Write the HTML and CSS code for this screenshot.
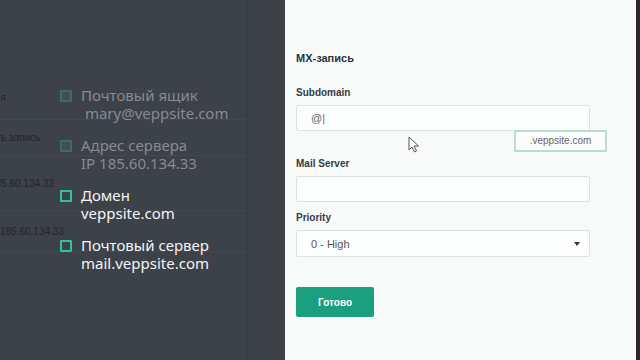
FILE: index.html
```html
<!DOCTYPE html>
<html lang="ru">
<head>
  <meta charset="UTF-8">
  <meta name="viewport" content="width=device-width, initial-scale=1.0">
  <title>MX-запись</title>
  <link rel="stylesheet" href="styles.css">
</head>
<body>
  <div class="overlay">
    <div class="backdrop">
      <div class="bg-row row-1"><span class="col-a">Почтовая</span></div>
      <div class="bg-row row-2"><span class="col-b">Добавить запись</span></div>
      <div class="bg-row row-3"><span class="col-c">185.60.134.33</span></div>
      <div class="bg-row row-4"><span class="col-d">185.60.134.33</span></div>
    </div>

    <ul class="steps">
      <li class="step">
        <span class="check"></span>
        <div class="step-text">Почтовый ящик<br>&nbsp;mary@veppsite.com</div>
      </li>
      <li class="step">
        <span class="check"></span>
        <div class="step-text">Адрес сервера<br>IP 185.60.134.33</div>
      </li>
      <li class="step active">
        <span class="check"></span>
        <div class="step-text">Домен<br>veppsite.com</div>
      </li>
      <li class="step active">
        <span class="check"></span>
        <div class="step-text">Почтовый сервер<br>mail.veppsite.com</div>
      </li>
    </ul>
  </div>

  <div class="panel">
    <form class="record-form">
      <h2>MX-запись</h2>

      <div class="form-group">
        <label for="subdomain">Subdomain</label>
        <div class="field-wrap">
          <input type="text" id="subdomain" value="@|">
          <div class="hint">.veppsite.com</div>
          <svg class="pointer" width="12" height="17" viewBox="0 0 12 17">
            <path d="M1 1 L1 14 L4 11 L6.5 16 L8.5 15 L6 10 L10.5 10 Z" fill="#fff" stroke="#555" stroke-width="1"/>
          </svg>
        </div>
      </div>

      <div class="form-group">
        <label for="mailServer">Mail Server</label>
        <input type="text" id="mailServer">
      </div>

      <div class="form-group">
        <label for="priority">Priority</label>
        <div class="select">
          <span>0 - High</span>
          <span class="caret"></span>
        </div>
      </div>

      <button type="button">Готово</button>
    </form>
  </div>

  <div class="edge"></div>
</body>
</html>
```

FILE: styles.css
```css
body {
  margin: 0;
  width: 640px;
  height: 360px;
  display: flex;
  overflow: hidden;
  background: #3d4148;
}

.overlay {
  width: 285px;
  flex-shrink: 0;
  display: grid;
  overflow: hidden;
  background: #3d4148;
  font-family: 'Noto Sans', sans-serif;
}

.backdrop,
.steps {
  grid-area: 1 / 1;
}

.backdrop {
  padding-top: 75px;
  width: 247px;
  border-right: 1px solid #393c42;
}

.bg-row {
  display: flex;
  align-items: center;
  border-bottom: 1px solid #43474e;
  font-family: 'Liberation Sans', sans-serif;
  font-size: 10px;
  color: #222529;
  overflow: hidden;
}

.row-1 { height: 44px; }
.row-2 { height: 35px; }
.row-3 { height: 54px; }
.row-4 { height: 40px; }

.bg-row span {
  white-space: nowrap;
}

.col-a { margin-left: -38px; }
.col-b { margin-left: -38px; }
.col-c { margin-left: -10px; }
.col-d { margin-left: 0; }

.steps {
  list-style: none;
  margin: 0;
  padding: 86px 0 0 60px;
  display: flex;
  flex-direction: column;
  gap: 14px;
}

.step {
  display: flex;
  align-items: flex-start;
  gap: 9px;
}

.check {
  width: 8px;
  height: 8px;
  margin-top: 4px;
  border: 2px solid #3b6e60;
  border-radius: 1px;
  background: #464b4e;
}

.step-text {
  font-size: 15px;
  line-height: 18px;
  color: #878b90;
}

.step.active .check {
  border-color: #2fc396;
  background: #3d4349;
}

.step.active .step-text {
  color: #f4f5f6;
}

.panel {
  flex: 1;
  background: #f8faf9;
  padding: 51px 0 0 11px;
  font-family: 'Liberation Sans', Arial, sans-serif;
}

.record-form h2 {
  margin: 0 0 21px;
  font-size: 11px;
  line-height: 14px;
  font-weight: bold;
  color: #2a3340;
}

.form-group {
  margin-bottom: 9px;
}

label {
  display: block;
  margin-bottom: 5px;
  font-size: 10px;
  line-height: 14px;
  font-weight: bold;
  color: #353c45;
}

input[type="text"],
.select {
  box-sizing: border-box;
  width: 294px;
  height: 26px;
  padding: 0 14px;
  border: 1px solid #dde2e5;
  border-radius: 2px;
  background: #fcfdfd;
  font-family: inherit;
  font-size: 11px;
  color: #666;
  display: block;
}

.field-wrap {
  position: relative;
  margin-bottom: 26px;
}

.hint {
  position: absolute;
  left: 218px;
  top: 25px;
  width: 89px;
  height: 18px;
  border: 2px solid #b9ddd1;
  background: #fbfcfc;
  font-size: 10px;
  line-height: 18px;
  color: #666;
  text-align: center;
}

.pointer {
  position: absolute;
  left: 112px;
  top: 31px;
}

.select {
  height: 27px;
  display: flex;
  align-items: center;
  justify-content: space-between;
  color: #555;
}

.caret {
  width: 0;
  height: 0;
  border-left: 3px solid transparent;
  border-right: 3px solid transparent;
  border-top: 4px solid #333;
  margin-right: -5px;
}

button {
  margin-top: 21px;
  width: 78px;
  height: 30px;
  border: none;
  border-radius: 2px;
  background: #1a9f7f;
  color: #fff;
  font-family: inherit;
  font-size: 10px;
  font-weight: bold;
}

.edge {
  width: 4px;
  background: #2b2624;
}
```
